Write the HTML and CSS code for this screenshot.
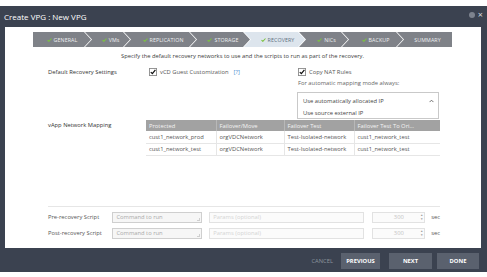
FILE: index.html
```html
<!DOCTYPE html>
<html lang="en">
<head>
    <meta charset="UTF-8">
    <title>Create VPG : New VPG</title>
    <link rel="stylesheet" href="styles.css">
</head>
<body>
<div class="dialog">
    <!-- Title bar -->
    <div class="titlebar">
        <span class="title">Create VPG : New VPG</span>
        <span class="tools">
            <span class="tool-help"></span>
            <span class="tool-close">&times;</span>
        </span>
    </div>

    <div class="panel">
        <!-- Wizard steps -->
        <ol class="steps">
            <li class="step s-general"><svg class="tick" viewBox="0 0 6 5"><path d="M0.5 2.6 L2.2 4.2 L5.5 0.6" /></svg>GENERAL</li>
            <li class="step s-vms"><svg class="tick" viewBox="0 0 6 5"><path d="M0.5 2.6 L2.2 4.2 L5.5 0.6" /></svg>VMs</li>
            <li class="step s-replication"><svg class="tick" viewBox="0 0 6 5"><path d="M0.5 2.6 L2.2 4.2 L5.5 0.6" /></svg>REPLICATION</li>
            <li class="step s-storage"><svg class="tick" viewBox="0 0 6 5"><path d="M0.5 2.6 L2.2 4.2 L5.5 0.6" /></svg>STORAGE</li>
            <li class="step s-recovery active"><svg class="tick" viewBox="0 0 6 5"><path d="M0.5 2.6 L2.2 4.2 L5.5 0.6" /></svg>RECOVERY</li>
            <li class="step s-nics"><svg class="tick" viewBox="0 0 6 5"><path d="M0.5 2.6 L2.2 4.2 L5.5 0.6" /></svg>NICs</li>
            <li class="step s-backup"><svg class="tick" viewBox="0 0 6 5"><path d="M0.5 2.6 L2.2 4.2 L5.5 0.6" /></svg>BACKUP</li>
            <li class="step s-summary">SUMMARY</li>
        </ol>

        <p class="intro">Specify the default recovery networks to use and the scripts to run as part of the recovery.</p>

        <!-- Default settings -->
        <div class="settings">
            <div class="label label-settings">Default Recovery Settings</div>
            <div class="col-a">
                <div class="check">
                    <svg class="box" viewBox="0 0 9 9"><rect x="0.5" y="0.5" width="8" height="8" /><path d="M2 4.6 L3.8 6.4 L7.2 2.2" /></svg>
                    <span>vCD Guest Customization</span>
                    <span class="help-link">[?]</span>
                </div>
            </div>
            <div class="col-b">
                <div class="check">
                    <svg class="box" viewBox="0 0 9 9"><rect x="0.5" y="0.5" width="8" height="8" /><path d="M2 4.6 L3.8 6.4 L7.2 2.2" /></svg>
                    <span>Copy NAT Rules</span>
                </div>
                <div class="hint">For automatic mapping mode always:</div>
                <div class="dropdown">
                    <div class="option selected">
                        <span>Use automatically allocated IP</span>
                        <svg class="caret" viewBox="0 0 6 4"><path d="M0.7 3.3 L3 1 L5.3 3.3" /></svg>
                    </div>
                    <div class="option">Use source external IP</div>
                </div>
            </div>
        </div>

        <!-- Network mapping -->
        <div class="mapping">
            <div class="label label-mapping">vApp Network Mapping</div>
            <table class="net-table">
                <thead>
                    <tr>
                        <th class="c1">Protected</th>
                        <th class="c2">Failover/Move</th>
                        <th class="c3">Failover Test</th>
                        <th class="c4">Failover Test To Ori...</th>
                    </tr>
                </thead>
                <tbody>
                    <tr>
                        <td>cust1_network_prod</td>
                        <td>orgVDCNetwork</td>
                        <td>Test-Isolated-network</td>
                        <td>cust1_network_test</td>
                    </tr>
                    <tr>
                        <td>cust1_network_test</td>
                        <td>orgVDCNetwork</td>
                        <td>Test-Isolated-network</td>
                        <td>cust1_network_test</td>
                    </tr>
                </tbody>
            </table>
        </div>

        <!-- Scripts -->
        <div class="scripts">
            <div class="script-row">
                <div class="label label-script">Pre-recovery Script</div>
                <div class="field cmd">Command to run<span class="grip"></span></div>
                <div class="field params">Params (optional)</div>
                <div class="field timeout">300<span class="spin"><i>&#9650;</i><i>&#9660;</i></span></div>
                <span class="unit">sec</span>
            </div>
            <div class="script-row">
                <div class="label label-script">Post-recovery Script</div>
                <div class="field cmd">Command to run<span class="grip"></span></div>
                <div class="field params">Params (optional)</div>
                <div class="field timeout">300<span class="spin"><i>&#9650;</i><i>&#9660;</i></span></div>
                <span class="unit">sec</span>
            </div>
        </div>
    </div>

    <!-- Footer buttons -->
    <div class="footer">
        <span class="cancel">CANCEL</span>
        <button class="btn btn-prev">PREVIOUS</button>
        <button class="btn btn-next">NEXT</button>
        <button class="btn btn-done">DONE</button>
    </div>
</div>
</body>
</html>
```

FILE: styles.css
```css
* {
    box-sizing: border-box;
    margin: 0;
    padding: 0;
}

body {
    background: #ffffff;
    font-family: "Open Sans", "Liberation Sans", sans-serif;
    font-size: 5.8px;
    color: #3a3a3a;
}

.dialog {
    margin-top: 6px;
    height: 266px;
    background: #3b4250;
    display: flex;
    flex-direction: column;
}

/* Title bar */
.titlebar {
    height: 21px;
    display: flex;
    align-items: center;
    justify-content: space-between;
    padding: 0 4px 0 4px;
}

.title {
    color: #ffffff;
    font-size: 8px;
}

.tools {
    display: flex;
    align-items: center;
    gap: 3px;
    margin-top: -4px;
}

.tool-help {
    width: 6px;
    height: 6px;
    border-radius: 50%;
    background: #7d838e;
}

.tool-close {
    color: #d4d8de;
    font-size: 9px;
    line-height: 8px;
}

/* Main panel */
.panel {
    height: 221px;
    margin: 0 6px 0 5px;
    background: #ffffff;
    padding-left: 43px;
}

/* Wizard steps */
.steps {
    list-style: none;
    display: flex;
    margin: 5px 0 0 -15px;
    height: 15px;
}

.step {
    height: 15px;
    display: flex;
    align-items: center;
    justify-content: center;
    gap: 2px;
    background: #7f8288;
    color: #eef0f2;
    font-size: 5.3px;
    letter-spacing: 0.1px;
    margin-left: -6px;
    padding-left: 6px;
    clip-path: polygon(0 0, calc(100% - 7px) 0, 100% 50%, calc(100% - 7px) 100%, 0 100%, 7px 50%);
}

.step.s-general {
    margin-left: 0;
    padding-left: 0;
    clip-path: polygon(0 0, calc(100% - 7px) 0, 100% 50%, calc(100% - 7px) 100%, 0 100%);
}

.step.s-summary {
    clip-path: polygon(0 0, 100% 0, 100% 100%, 0 100%, 7px 50%);
}

.step.active {
    background: #dde5ed;
    color: #5c6d7d;
}

.s-general { width: 58px; }
.s-vms { width: 45px; }
.s-replication { width: 72px; }
.s-storage { width: 60px; }
.s-recovery { width: 61px; }
.s-nics { width: 49px; }
.s-backup { width: 61px; }
.s-summary { width: 55px; }

.tick {
    width: 5px;
    height: 4px;
}

.tick path {
    fill: none;
    stroke: #7cc242;
    stroke-width: 1.3;
}

.intro {
    margin: 4px 0 0 -43px;
    text-align: center;
    line-height: 10px;
    padding-right: 1px;
}

/* Settings */
.label {
    color: #333333;
    line-height: 10px;
}

.settings {
    display: flex;
    height: 59px;
}

.label-settings {
    width: 101px;
    padding-top: 6px;
}

.col-a {
    width: 149px;
    padding-top: 6px;
}

.col-b {
    padding-top: 6px;
}

.check {
    display: flex;
    align-items: center;
    gap: 3px;
    height: 10px;
    color: #555555;
}

.box {
    width: 8px;
    height: 8px;
}

.box rect {
    fill: #ffffff;
    stroke: #8a8a8a;
}

.box path {
    fill: none;
    stroke: #111111;
    stroke-width: 1.4;
}

.help-link {
    color: #4a8fd0;
    margin-left: 2px;
}

.hint {
    margin-top: 1px;
    line-height: 10px;
    color: #666666;
}

.dropdown {
    margin: 4px 0 0 -1px;
    width: 142px;
    height: 27px;
    border: 1px solid #c9c9c9;
    padding: 2px 4px 0 5px;
    color: #444444;
}

.option {
    display: flex;
    justify-content: space-between;
    align-items: center;
    height: 12px;
}

.caret {
    width: 5px;
    height: 4px;
}

.caret path {
    fill: none;
    stroke: #555555;
    stroke-width: 1;
}

/* Network mapping */
.mapping {
    display: flex;
}

.label-mapping {
    width: 98px;
    line-height: 11px;
}

.net-table {
    width: 294px;
    border-collapse: collapse;
    color: #555555;
}

.net-table th {
    background: #a2a2a2;
    color: #f4f4f4;
    font-weight: normal;
    text-align: left;
    height: 11px;
    padding: 0 3px;
    border-right: 1px solid #b8b8b8;
}

.net-table td {
    height: 12px;
    padding: 0 3px;
    border-bottom: 1px solid #e6e6e6;
    border-right: 1px solid #e6e6e6;
}

.net-table td:last-child,
.net-table th:last-child {
    border-right: none;
}

.c1 { width: 70px; }
.c2 { width: 68px; }
.c3 { width: 70px; }

/* Scripts */
.scripts {
    margin-top: 50px;
    width: 392px;
    border-top: 1px solid #e6e6e6;
    padding-top: 5px;
    display: flex;
    flex-direction: column;
    gap: 5px;
}

.script-row {
    display: flex;
    align-items: center;
    height: 11px;
}

.label-script {
    width: 66px;
    color: #555555;
}

.field {
    height: 11px;
    border: 1px solid #cfcfcf;
    background: #f6f6f6;
    padding-left: 3px;
    line-height: 9px;
    color: #a9a9a9;
    position: relative;
}

.cmd {
    width: 92px;
}

.grip {
    position: absolute;
    right: 1px;
    bottom: 1px;
    width: 3px;
    height: 3px;
    border-right: 1px solid #cfcfcf;
    border-bottom: 1px solid #cfcfcf;
}

.params {
    width: 159px;
    margin-left: 7px;
    background: #fbfbfb;
    border-color: #e2e2e2;
    color: #d4d4d4;
}

.timeout {
    width: 54px;
    margin-left: 8px;
    background: #fbfbfb;
    border-color: #e2e2e2;
    color: #c4c4c4;
    text-align: center;
    padding-left: 0;
}

.spin {
    position: absolute;
    right: 1px;
    top: 0;
    display: flex;
    flex-direction: column;
    font-size: 3px;
    line-height: 4px;
    color: #9a9a9a;
}

.spin i {
    font-style: normal;
}

.unit {
    margin-left: 6px;
    color: #555555;
}

/* Footer */
.footer {
    display: flex;
    justify-content: flex-end;
    align-items: flex-start;
    height: 24px;
    padding: 5px 8px 0 0;
}

.cancel {
    color: #8d949e;
    font-size: 5.8px;
    line-height: 16px;
    margin-right: 8px;
}

.btn {
    height: 16px;
    border: none;
    background: #5a616e;
    color: #ffffff;
    font-family: "Open Sans", "Liberation Sans", sans-serif;
    font-size: 5.8px;
    font-weight: bold;
}

.btn-prev {
    width: 39px;
}

.btn-next {
    width: 43px;
    margin-left: 9px;
}

.btn-done {
    width: 42px;
    margin-left: 5px;
}
```
